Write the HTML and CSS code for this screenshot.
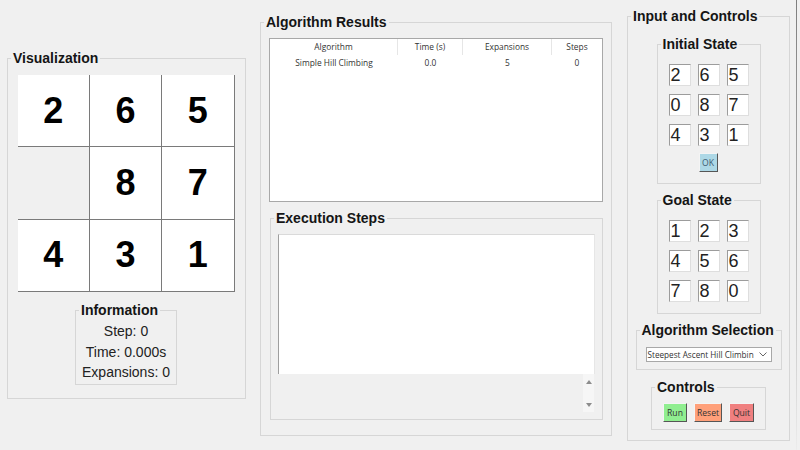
FILE: index.html
```html
<!DOCTYPE html>
<html lang="en">
<head>
<meta charset="utf-8">
<title>8-Puzzle Hill Climbing</title>
<link rel="stylesheet" href="styles.css">
</head>
<body>
  <fieldset class="frame col-vis">
    <legend>Visualization</legend>
    <div class="vis-body">
      <div class="board">
        <div class="tile">2</div>
        <div class="tile">6</div>
        <div class="tile">5</div>
        <div class="tile tile-empty"></div>
        <div class="tile">8</div>
        <div class="tile">7</div>
        <div class="tile">4</div>
        <div class="tile">3</div>
        <div class="tile">1</div>
      </div>
      <fieldset class="frame info">
        <legend>Information</legend>
        <div class="info-lines">
          <div>Step: 0</div>
          <div>Time: 0.000s</div>
          <div>Expansions: 0</div>
        </div>
      </fieldset>
    </div>
  </fieldset>

  <fieldset class="frame col-results">
    <legend>Algorithm Results</legend>
    <div class="results-body">
      <div class="tree">
        <div class="tree-head">
          <span>Algorithm</span><span>Time (s)</span><span>Expansions</span><span>Steps</span>
        </div>
        <div class="tree-row">
          <span>Simple Hill Climbing</span><span>0.0</span><span>5</span><span>0</span>
        </div>
      </div>
      <fieldset class="frame steps">
        <legend>Execution Steps</legend>
        <div class="steps-body">
          <div class="textarea"></div>
          <div class="scroll-stub">
            <span class="arrow-up"></span>
            <span class="arrow-down"></span>
          </div>
        </div>
      </fieldset>
    </div>
  </fieldset>

  <fieldset class="frame col-controls">
    <legend>Input and Controls</legend>
    <div class="controls-body">
      <fieldset class="frame state">
        <legend>Initial State</legend>
        <div class="state-body">
          <div class="entries">
            <div class="entry">2</div><div class="entry">6</div><div class="entry">5</div>
            <div class="entry">0</div><div class="entry">8</div><div class="entry">7</div>
            <div class="entry">4</div><div class="entry">3</div><div class="entry">1</div>
          </div>
          <div class="btn btn-ok">OK</div>
        </div>
      </fieldset>
      <fieldset class="frame state goal">
        <legend>Goal State</legend>
        <div class="state-body">
          <div class="entries">
            <div class="entry">1</div><div class="entry">2</div><div class="entry">3</div>
            <div class="entry">4</div><div class="entry">5</div><div class="entry">6</div>
            <div class="entry">7</div><div class="entry">8</div><div class="entry">0</div>
          </div>
        </div>
      </fieldset>
      <fieldset class="frame algo">
        <legend>Algorithm Selection</legend>
        <div class="algo-body">
          <div class="combo">
            <span class="combo-text">Steepest Ascent Hill Climbin</span>
            <svg class="chev" width="8" height="5" viewBox="0 0 8 5"><polyline points="0.5,0.5 4,4 7.5,0.5" fill="none" stroke="#666" stroke-width="1"/></svg>
          </div>
        </div>
      </fieldset>
      <fieldset class="frame ctrl">
        <legend>Controls</legend>
        <div class="ctrl-body">
          <div class="btn btn-run">Run</div>
          <div class="btn btn-reset">Reset</div>
          <div class="btn btn-quit">Quit</div>
        </div>
      </fieldset>
    </div>
  </fieldset>
</body>
</html>
```

FILE: styles.css
```css
* { box-sizing: border-box; }

html, body {
  margin: 0;
  padding: 0;
  background: #f0f0f0;
}

body {
  width: 797px;
  height: 450px;
  display: flex;
  align-items: flex-start;
  border-right: 1px solid #9a9a9a;
  border-image: linear-gradient(#7e7e7e, #c8c8c8 70%, #ececec) 1;
  font-family: "Liberation Sans", Arial, sans-serif;
  color: #1a1a1a;
  overflow: hidden;
}

.frame {
  margin: 0;
  padding: 0;
  min-width: 0;
  border: 1px solid #d6d6d6;
}

.frame > legend {
  margin-left: 3px;
  padding: 0 2px;
  font-family: "Liberation Sans", Arial, sans-serif;
  font-weight: bold;
  font-size: 14px;
  line-height: 16px;
  color: #151515;
}

/* ---------- Visualization ---------- */
.col-vis {
  margin-left: 7px;
  margin-top: 50px;
  width: 239px;
  height: 349px;
}

.vis-body {
  display: flex;
  flex-direction: column;
  align-items: center;
  padding: 9px 1px 0 0;
}

.board {
  width: 217px;
  height: 217px;
  display: grid;
  grid-template-columns: repeat(3, 1fr);
  grid-template-rows: repeat(3, 1fr);
}

.tile {
  display: flex;
  align-items: center;
  justify-content: center;
  background: #ffffff;
  border-right: 1px solid #7a7a7a;
  border-bottom: 1px solid #7a7a7a;
  font-weight: bold;
  font-size: 36px;
  color: #000;
}

.tile-empty {
  background: #f0f0f0;
}

.info {
  margin-top: 10px;
  width: 102px;
}

.info-lines {
  padding: 3px 0 1px;
  text-align: center;
  font-size: 14px;
  line-height: 20.5px;
  color: #222;
}

/* ---------- Results ---------- */
.col-results {
  margin-left: 14px;
  margin-top: 14px;
  width: 352px;
  height: 422px;
}

.results-body {
  padding: 8px 9px 0 8px;
}

.tree {
  width: 334px;
  height: 164px;
  background: #ffffff;
  border: 1px solid #a8a8a8;
  font-family: "Open Sans", "Noto Sans", sans-serif;
  font-size: 8.4px;
  color: #333;
}

.tree-head,
.tree-row {
  display: grid;
  grid-template-columns: 128px 65px 89px 50px;
  height: 16px;
  line-height: 16px;
  text-align: center;
}

.tree-head span {
  border-right: 1px solid #e6e6e6;
}

.tree-head span:last-child {
  border-right: none;
}

.steps {
  margin: 8px 0 0 1px;
  width: 333px;
  height: 210px;
}

.steps-body {
  padding: 8px 7px 0 7px;
  display: flex;
  flex-direction: column;
}

.textarea {
  width: 317px;
  height: 140px;
  background: #ffffff;
  border-left: 1px solid #9e9e9e;
  border-top: 1px solid #dadada;
  border-right: 1px solid #e6e6e6;
}

.scroll-stub {
  align-self: flex-end;
  margin-right: 1px;
  width: 11px;
  height: 38px;
  background: #f6f6f6;
  display: flex;
  flex-direction: column;
  align-items: center;
  justify-content: space-between;
  padding: 6px 0 5px;
}

.arrow-up,
.arrow-down {
  width: 0;
  height: 0;
  border-left: 3px solid transparent;
  border-right: 3px solid transparent;
}

.arrow-up { border-bottom: 4px solid #8c8c8c; }
.arrow-down { border-top: 4px solid #8c8c8c; }

/* ---------- Controls ---------- */
.col-controls {
  margin-left: 15px;
  margin-top: 8px;
  width: 163px;
  height: 433px;
}

.controls-body {
  display: flex;
  flex-direction: column;
  align-items: center;
  padding-top: 12px;
}

.state {
  width: 104px;
}

.goal {
  margin-top: 8px;
}

.state-body {
  display: flex;
  flex-direction: column;
  align-items: center;
  padding: 12px 0 11px;
}

.entries {
  display: grid;
  grid-template-columns: repeat(3, 22px);
  grid-auto-rows: 22px;
  column-gap: 7px;
  row-gap: 8px;
}

.entry {
  background: #ffffff;
  border: 1px solid #dedede;
  border-top-color: #9c9c9c;
  border-left-color: #9c9c9c;
  font-size: 18px;
  line-height: 20px;
  padding-left: 1px;
  color: #222;
}

.btn {
  font-family: "Open Sans", "Noto Sans", sans-serif;
  font-size: 8.6px;
  display: flex;
  align-items: center;
  justify-content: center;
  height: 19px;
  border: 1px solid #565656;
  border-top-color: #f4f4f4;
  border-left-color: #f4f4f4;
  color: #333;
}

.btn-ok {
  margin-top: 7px;
  width: 19px;
  background: #add8e6;
  color: #3d5d72;
  margin-left: -1px;
}

.algo {
  margin-top: 8px;
  width: 146px;
}

.algo-body {
  padding: 9px 9px 7px 9px;
}

.combo {
  width: 126px;
  height: 15px;
  background: #ffffff;
  border: 1px solid #a8a8a8;
  display: flex;
  align-items: center;
  padding-left: 1px;
  font-family: "Open Sans", "Noto Sans", sans-serif;
  font-size: 8.2px;
  color: #333;
}

.combo-text {
  flex: 1;
  white-space: nowrap;
}

.chev {
  flex: none;
  margin: 0 4px 0 3px;
}

.ctrl {
  margin-top: 9px;
  width: 115px;
}

.ctrl-body {
  display: flex;
  justify-content: center;
  gap: 7px;
  padding: 8px 0 7px;
}

.btn-run { width: 24px; background: #90ee90; }
.btn-reset { width: 28px; background: #ffa07a; }
.btn-quit { width: 25px; background: #f08080; }
```
